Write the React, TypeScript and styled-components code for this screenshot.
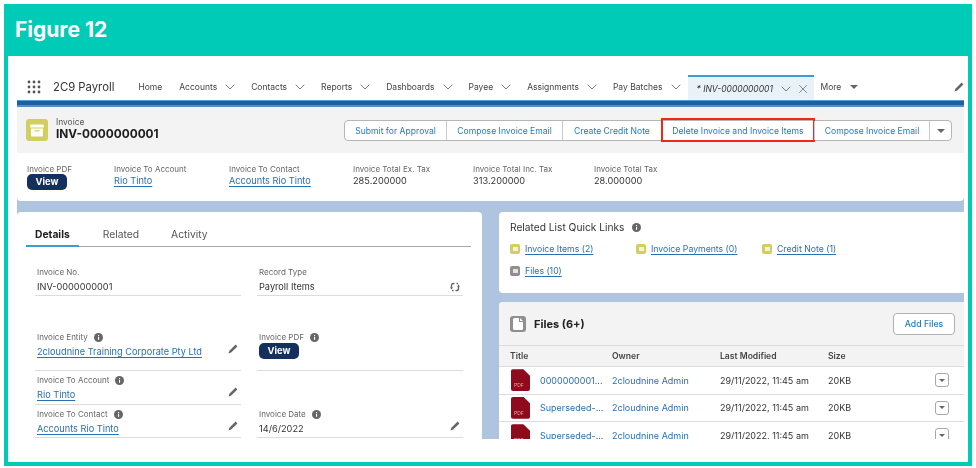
import React from "react";
import styled, { createGlobalStyle } from "styled-components";
import { ChevronDown, X } from "lucide-react";

const GlobalStyle = createGlobalStyle`
  html, body { margin: 0; padding: 0; background: #fff; }
  body { font-family: Inter, "Liberation Sans", sans-serif; color: #2b2b2b; }
  * { box-sizing: border-box; }
`;

const Page = styled.div`
  width: 976px;
  height: 468px;
  padding: 4px 4px 2px;
  background: #fff;
  overflow: hidden;
`;

const Frame = styled.div`
  height: 100%;
  display: flex;
  flex-direction: column;
  padding: 0 4px 4px;
  background: #00cbb7;
`;

const FigureTitle = styled.h1`
  height: 50px;
  margin: 0 0 2px;
  padding: 0 7px;
  display: flex;
  align-items: center;
  font: 700 21px Inter, sans-serif;
  color: #fff;
`;

const Sheet = styled.div`
  flex: 1;
  min-height: 0;
  display: flex;
  padding: 16px 4px 23px 9px;
  background: #fff;
`;

const App = styled.div`
  flex: 1;
  min-width: 0;
  display: flex;
  flex-direction: column;
  overflow: hidden;
  background: #afc4df;
  filter: blur(0.3px);
`;

const Nav = styled.nav`
  height: 28px;
  flex: none;
  display: flex;
  align-items: center;
  padding: 2px 0 0 10px;
  background: #fff;
  font-size: 8.5px;
  color: #333;
`;

const AppName = styled.span`
  margin: 0 24px 0 12px;
  font-size: 11.3px;
`;

const NavItem = styled.span`
  display: flex;
  align-items: center;
  gap: 9px;
  margin-right: 17px;
  white-space: nowrap;
  color: #444;
`;

const ChevronBox = styled.span`
  display: flex;
  margin: 0 -4px;
`;

const CloseBox = styled.span`
  display: flex;
  margin: 0 -3px 0 -3px;
`;

const ActiveTab = styled.span`
  align-self: flex-end;
  width: 126px;
  height: 25px;
  margin: 0 7px 0 -9px;
  padding-left: 9px;
  display: flex;
  align-items: center;
  gap: 9px;
  border-top: 2px solid #3d9bd6;
  background: #e9f1f9;
  white-space: nowrap;
`;

const NavSpacer = styled.span`
  flex: 1;
`;

const Stripe = styled.div`
  height: 7px;
  flex: none;
  background: linear-gradient(#4b9bd6 0 1px, #1d5f9f 1px 5px, #5d8cbc 5px);
`;

const Header = styled.header`
  height: 46px;
  flex: none;
  display: flex;
  align-items: center;
  padding: 0 12px 0 9px;
  background: #f3f3f3;
`;

const ObjectIcon = styled.div`
  width: 22px;
  height: 22px;
  flex: none;
  display: flex;
  align-items: center;
  justify-content: center;
  margin-right: 8px;
  border-radius: 3px;
  background: #d2cf5f;
`;

const TitleBlock = styled.div`
  flex: 1;
`;

const ObjectName = styled.div`
  font-size: 8.4px;
  line-height: 9px;
  color: #555;
`;

const RecordName = styled.div`
  font-size: 11.8px;
  line-height: 15px;
  font-weight: 700;
  color: #1c1c1c;
`;

const ButtonGroup = styled.div`
  display: flex;
  height: 21px;
  margin-top: 1px;
  border: 1px solid #b5b5b5;
  border-radius: 4px;
  background: #fff;
`;

const GroupButton = styled.span<{ $width: number; $flagged?: boolean }>`
  position: relative;
  width: ${(p) => p.$width}px;
  display: flex;
  align-items: center;
  justify-content: center;
  border-left: 1px solid #c9c9c9;
  font-size: 8.6px;
  color: #1b7cc0;
  white-space: nowrap;
  &:first-child { border-left: 0; }
  ${(p) =>
    p.$flagged &&
    `&::after {
      content: "";
      position: absolute;
      inset: -3px -1px -2px -1px;
      border: 2.5px solid #ee2a16;
    }`}
`;

const Highlights = styled.section`
  height: 48px;
  flex: none;
  display: flex;
  padding: 11px 0 0 10px;
  border-radius: 0 0 4px 4px;
  background: #fff;
`;

const Highlight = styled.div<{ $width: number }>`
  width: ${(p) => p.$width}px;
`;

const Label = styled.div`
  display: flex;
  align-items: center;
  gap: 6px;
  height: 10px;
  font-size: 8px;
  color: #666;
  white-space: nowrap;
`;

const Value = styled.div`
  font-size: 9.2px;
  line-height: 14px;
  color: #333;
  white-space: nowrap;
`;

const RecordLink = styled.a`
  display: block;
  width: fit-content;
  font-size: 9.2px;
  line-height: 14px;
  color: #2a6fb0;
  text-decoration: underline;
  text-underline-offset: 1.5px;
  text-decoration-thickness: 0.5px;
  white-space: nowrap;
`;

const ViewButton = styled.span`
  display: block;
  width: 40px;
  height: 16px;
  line-height: 16px;
  border-radius: 5px;
  background: #14305f;
  color: #fff;
  font-size: 9.4px;
  font-weight: 700;
  text-align: center;
`;

const FieldButton = styled(ViewButton)`
  margin-top: -2px;
`;

const Columns = styled.div`
  flex: 1;
  min-height: 0;
  display: grid;
  grid-template-columns: 465px 465px;
  justify-content: space-between;
  margin-top: 11px;
`;

const DetailCard = styled.section`
  overflow: hidden;
  padding: 0 11px 0 9px;
  border-radius: 4px 4px 0 0;
  background: #fff;
`;

const Tabs = styled.div`
  height: 35px;
  display: flex;
  align-items: flex-end;
  gap: 24px;
  border-bottom: 1px solid #a8a8a8;
`;

const Tab = styled.span<{ $active?: boolean }>`
  height: 22px;
  margin-bottom: -1px;
  padding: 0 ${(p) => (p.$active ? 9 : 8)}px 0 ${(p) => (p.$active ? 9 : 0)}px;
  font-size: 10.3px;
  line-height: 19px;
  font-weight: ${(p) => (p.$active ? 700 : 400)};
  color: ${(p) => (p.$active ? "#222" : "#555")};
  border-bottom: ${(p) => (p.$active ? "2px solid #3d9bd6" : "0")};
`;

const FieldRow = styled.div<{ $top: number; $height: number }>`
  display: grid;
  grid-template-columns: 206px 206px;
  gap: 16px;
  height: ${(p) => p.$height}px;
  margin: ${(p) => p.$top}px 0 0 9px;
`;

const Field = styled.div<{ $blank?: boolean }>`
  position: relative;
  padding-left: 2px;
  border-bottom: ${(p) => (p.$blank ? "0" : "1px solid #dcdcdc")};
`;

const FieldBody = styled.div`
  margin-top: 3px;
`;

const FieldAction = styled.span<{ $bottom?: number }>`
  position: absolute;
  right: 3px;
  bottom: ${(p) => p.$bottom ?? 6}px;
  display: flex;
`;

const QuickLinksCard = styled.section`
  height: 81px;
  padding: 7px 11px 0;
  border-radius: 4px 0 0 4px;
  background: #fff;
`;

const QuickTitle = styled.div`
  display: flex;
  align-items: center;
  gap: 8px;
  height: 16px;
  font-size: 10.2px;
  color: #333;
`;

const QuickGrid = styled.div`
  display: flex;
  flex-wrap: wrap;
  width: 400px;
  margin-top: 3px;
`;

const QuickLink = styled.span<{ $width: number }>`
  width: ${(p) => p.$width}px;
  height: 22px;
  display: flex;
  align-items: center;
  gap: 5px;
  font-size: 8.7px;
  color: #2a6fb0;
  text-decoration: underline;
  text-decoration-thickness: 0.5px;
  text-underline-offset: 1.5px;
  white-space: nowrap;
`;

const QuickIcon = styled.span<{ $color: string }>`
  width: 10px;
  height: 10px;
  flex: none;
  display: flex;
  align-items: center;
  justify-content: center;
  border-radius: 2px;
  background: ${(p) => p.$color};
  &::after {
    content: "";
    width: 5px;
    height: 4px;
    background: #fff;
    opacity: 0.75;
  }
`;

const RightStack = styled.div`
  min-height: 0;
  display: flex;
  flex-direction: column;
  gap: 9px;
`;

const FilesCard = styled.section`
  flex: 1;
  min-height: 0;
  overflow: hidden;
  border-radius: 4px 0 0 0;
  background: #fff;
`;

const FilesHeader = styled.div`
  height: 44px;
  display: flex;
  align-items: center;
  padding: 0 9px 0 11px;
  border-bottom: 1px solid #dcdcdc;
  background: #f3f3f3;
`;

const FilesIcon = styled.div`
  width: 16px;
  height: 16px;
  flex: none;
  display: flex;
  align-items: center;
  justify-content: center;
  border-radius: 3px;
  background: #8f8f8f;
`;

const FilesTitle = styled.div`
  flex: 1;
  margin-left: 8px;
  font-size: 11px;
  font-weight: 700;
  color: #222;
`;

const AddFiles = styled.span`
  width: 62px;
  height: 22px;
  line-height: 20px;
  border: 1px solid #b0b0b0;
  border-radius: 4px;
  background: #fff;
  color: #1b7cc0;
  font-size: 8.7px;
  font-weight: 500;
  text-align: center;
`;

const Row = styled.div<{ $head?: boolean }>`
  height: ${(p) => (p.$head ? 21 : 27.5)}px;
  display: grid;
  grid-template-columns: 102px 108px 108px 1fr 14px;
  align-items: center;
  padding: 0 15px 0 11px;
  border-bottom: 1px solid #dcdcdc;
  background: ${(p) => (p.$head ? "#f3f3f3" : "#fff")};
  font-size: ${(p) => (p.$head ? 8.6 : 9)}px;
  font-weight: ${(p) => (p.$head ? 600 : 400)};
  color: ${(p) => (p.$head ? "#444" : "#333")};
  white-space: nowrap;
`;

const TitleCell = styled.span`
  display: flex;
  align-items: center;
  gap: 10px;
  padding-left: 1px;
  color: #2a6fb0;
`;

const OwnerCell = styled.span`
  color: #2a6fb0;
`;

const PdfIcon = styled.span`
  width: 19px;
  height: 22px;
  flex: none;
  padding: 0 0 3px 3px;
  display: flex;
  align-items: flex-end;
  border-radius: 2px;
  background: #8f0a1d;
  clip-path: polygon(0 0, 65% 0, 100% 30%, 100% 100%, 0 100%);
  color: #e6a3aa;
  font-size: 5px;
  line-height: 6px;
`;

const RowMenu = styled.span`
  width: 14px;
  height: 14px;
  display: flex;
  align-items: center;
  justify-content: center;
  border: 1px solid #a8a8a8;
  border-radius: 3px;
  background: #fff;
`;

const Caret = styled.span`
  width: 0;
  height: 0;
  border-left: 4px solid transparent;
  border-right: 4px solid transparent;
  border-top: 4px solid #666;
`;

const SmallCaret = styled(Caret)`
  border-left-width: 3px;
  border-right-width: 3px;
  border-top-width: 3px;
`;

const GridIcon = () => (
  <svg width="14" height="14" viewBox="0 0 14 14" fill="#555">
    {[2, 7, 12].flatMap((y) =>
      [2, 7, 12].map((x) => <circle key={`${x}-${y}`} cx={x} cy={y} r="1.4" />)
    )}
  </svg>
);

const Chevron = () => (
  <ChevronBox>
    <ChevronDown size={16} strokeWidth={1.3} color="#666" />
  </ChevronBox>
);

const Pencil = () => (
  <svg width="10" height="10" viewBox="0 0 10 10" fill="#666">
    <path d="M7.600.6 9.400 2.400 3.200 8.600.5 9.500l.9-2.700z" />
  </svg>
);

const Info = () => (
  <svg width="9" height="9" viewBox="0 0 9 9">
    <circle cx="4.5" cy="4.5" r="4.5" fill="#666" />
    <rect x="4" y="3.8" width="1.1" height="3" fill="#fff" />
    <rect x="4" y="2" width="1.1" height="1.1" fill="#fff" />
  </svg>
);

const SwapIcon = () => (
  <svg width="10" height="10" viewBox="0 0 10 10" fill="none" stroke="#666" strokeWidth="1.4">
    <path d="M1.500 6V3.500C1.500 2.500 2.200 1.500 3.200 1.500h1.300M3.500 8.500H2M8.500 4v2.500c0 1-.7 2-1.700 2H5.500M6.500 1.500H8" />
    <path d="M0 5.500h3L1.500 7.500zM7 4.500h3L8.500 2.500z" fill="#666" stroke="none" />
  </svg>
);

const ArchiveIcon = () => (
  <svg width="14" height="13" viewBox="0 0 14 13" fill="#fff">
    <path d="M1 .5h12a.8.8 0 0 1 .8.8V3.500H.2V1.300A.8.8 0 0 1 1 .5z" />
    <path d="M1 4.500h12v7.200a.8.8 0 0 1-.8.8H1.800a.8.8 0 0 1-.8-.8zM4.500 6.300v1.200h5V6.300z" fillRule="evenodd" />
  </svg>
);

const DocIcon = () => (
  <svg width="10" height="12" viewBox="0 0 10 12" fill="#fff">
    <path d="M1.500 0H6v3.500a.5.5 0 0 0 .5.5H10v6.500a1.500 1.500 0 0 1-1.500 1.500h-7A1.500 1.500 0 0 1 0 10.500v-9A1.500 1.500 0 0 1 1.500 0zM7 0l3 3H7z" />
  </svg>
);

const navItems = ["Accounts", "Contacts", "Reports", "Dashboards", "Payee", "Assignments", "Pay Batches"];

const highlights = [
  { label: "Invoice To Account", link: "Rio Tinto", width: 115 },
  { label: "Invoice To Contact", link: "Accounts Rio Tinto", width: 124 },
  { label: "Invoice Total Ex. Tax", value: "285.200000", width: 120 },
  { label: "Invoice Total Inc. Tax", value: "313.200000", width: 121 },
  { label: "Invoice Total Tax", value: "28.000000", width: 120 },
];

const buttons = [
  { text: "Submit for Approval", width: 101 },
  { text: "Compose Invoice Email", width: 116 },
  { text: "Create Credit Note", width: 99 },
  { text: "Delete Invoice and Invoice Items", width: 153, flagged: true },
  { text: "Compose Invoice Email", width: 115 },
];

const quickLinks = [
  { text: "Invoice Items (2)", color: "#d2cf5f", width: 126 },
  { text: "Invoice Payments (0)", color: "#d2cf5f", width: 126 },
  { text: "Credit Note (1)", color: "#d2cf5f", width: 110 },
  { text: "Files (10)", color: "#8f8f8f", width: 100 },
];

const files = ["0000000001...", "Superseded-...", "Superseded-..."];

export default function InvoicePage() {
  return (
    <Page>
      <GlobalStyle />
      <Frame>
        <FigureTitle>Figure 12</FigureTitle>
        <Sheet>
          <App>
            <Nav>
              <GridIcon />
              <AppName>2C9 Payroll</AppName>
              <NavItem>Home</NavItem>
              {navItems.map((item) => (
                <NavItem key={item}>
                  {item}
                  <Chevron />
                </NavItem>
              ))}
              <ActiveTab>
                <i>* INV-0000000001</i>
                <Chevron />
                <CloseBox>
                  <X size={14} strokeWidth={1.3} color="#666" />
                </CloseBox>
              </ActiveTab>
              <NavItem>
                More
                <Caret />
              </NavItem>
              <NavSpacer />
              <Pencil />
            </Nav>
            <Stripe />
            <Header>
              <ObjectIcon>
                <ArchiveIcon />
              </ObjectIcon>
              <TitleBlock>
                <ObjectName>Invoice</ObjectName>
                <RecordName>INV-0000000001</RecordName>
              </TitleBlock>
              <ButtonGroup>
                {buttons.map((b) => (
                  <GroupButton key={b.text + b.width} $width={b.width} $flagged={b.flagged}>
                    {b.text}
                  </GroupButton>
                ))}
                <GroupButton $width={22}>
                  <Caret />
                </GroupButton>
              </ButtonGroup>
            </Header>
            <Highlights>
              <Highlight $width={87}>
                <Label>Invoice PDF</Label>
                <ViewButton>View</ViewButton>
              </Highlight>
              {highlights.map((h) => (
                <Highlight key={h.label} $width={h.width}>
                  <Label>{h.label}</Label>
                  {h.link ? <RecordLink>{h.link}</RecordLink> : <Value>{h.value}</Value>}
                </Highlight>
              ))}
            </Highlights>
            <Columns>
              <DetailCard>
                <Tabs>
                  <Tab $active>Details</Tab>
                  <Tab>Related</Tab>
                  <Tab>Activity</Tab>
                </Tabs>
                <FieldRow $top={20} $height={29}>
                  <Field>
                    <Label>Invoice No.</Label>
                    <FieldBody><Value>INV-0000000001</Value></FieldBody>
                  </Field>
                  <Field>
                    <Label>Record Type</Label>
                    <FieldBody><Value>Payroll Items</Value></FieldBody>
                    <FieldAction $bottom={3}><SwapIcon /></FieldAction>
                  </Field>
                </FieldRow>
                <FieldRow $top={36} $height={39}>
                  <Field>
                    <Label>Invoice Entity <Info /></Label>
                    <FieldBody><RecordLink>2cloudnine Training Corporate Pty Ltd</RecordLink></FieldBody>
                    <FieldAction $bottom={16}><Pencil /></FieldAction>
                  </Field>
                  <Field>
                    <Label>Invoice PDF <Info /></Label>
                    <FieldBody><FieldButton>View</FieldButton></FieldBody>
                  </Field>
                </FieldRow>
                <FieldRow $top={4} $height={30}>
                  <Field>
                    <Label>Invoice To Account <Info /></Label>
                    <FieldBody><RecordLink>Rio Tinto</RecordLink></FieldBody>
                    <FieldAction $bottom={7}><Pencil /></FieldAction>
                  </Field>
                  <Field $blank />
                </FieldRow>
                <FieldRow $top={4} $height={29}>
                  <Field>
                    <Label>Invoice To Contact <Info /></Label>
                    <FieldBody><RecordLink>Accounts Rio Tinto</RecordLink></FieldBody>
                    <FieldAction><Pencil /></FieldAction>
                  </Field>
                  <Field>
                    <Label>Invoice Date <Info /></Label>
                    <FieldBody><Value>14/6/2022</Value></FieldBody>
                    <FieldAction><Pencil /></FieldAction>
                  </Field>
                </FieldRow>
              </DetailCard>
              <RightStack>
                <QuickLinksCard>
                  <QuickTitle>Related List Quick Links <Info /></QuickTitle>
                  <QuickGrid>
                    {quickLinks.map((q) => (
                      <QuickLink key={q.text} $width={q.width}>
                        <QuickIcon $color={q.color} />
                        {q.text}
                      </QuickLink>
                    ))}
                  </QuickGrid>
                </QuickLinksCard>
                <FilesCard>
                  <FilesHeader>
                    <FilesIcon><DocIcon /></FilesIcon>
                    <FilesTitle>Files (6+)</FilesTitle>
                    <AddFiles>Add Files</AddFiles>
                  </FilesHeader>
                  <Row $head>
                    <span>Title</span>
                    <span>Owner</span>
                    <span>Last Modified</span>
                    <span>Size</span>
                  </Row>
                  {files.map((f, i) => (
                    <Row key={i}>
                      <TitleCell>
                        <PdfIcon>PDF</PdfIcon>
                        {f}
                      </TitleCell>
                      <OwnerCell>2cloudnine Admin</OwnerCell>
                      <span>29/11/2022, 11:45 am</span>
                      <span>20KB</span>
                      <RowMenu><SmallCaret /></RowMenu>
                    </Row>
                  ))}
                </FilesCard>
              </RightStack>
            </Columns>
          </App>
        </Sheet>
      </Frame>
    </Page>
  );
}
